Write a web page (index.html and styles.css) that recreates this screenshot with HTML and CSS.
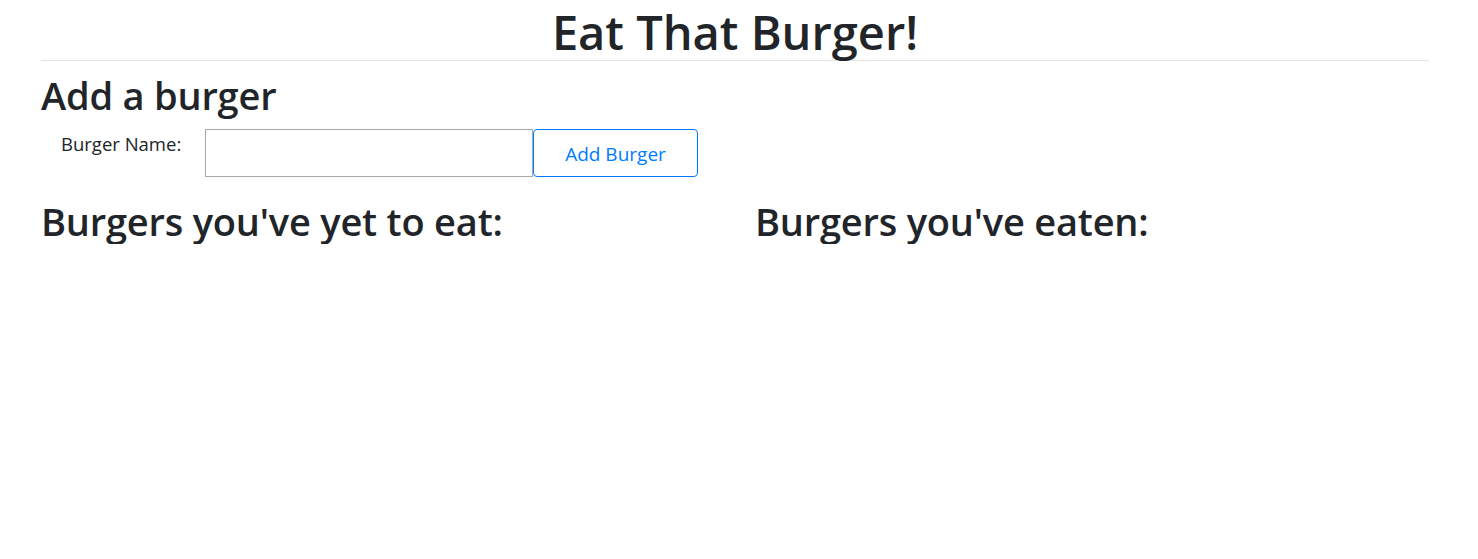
FILE: index.html
```html
<!DOCTYPE html>
<html lang="en">
<head>
<meta charset="utf-8">
<title>Eat That Burger!</title>
<link rel="stylesheet" href="styles.css">
</head>
<body>
<div class="page">
  <header class="masthead">
    <h1 class="title">Eat That Burger!</h1>
  </header>
  <section class="add">
    <h2 class="section-title">Add a burger</h2>
    <form class="add-form">
      <label class="add-label" for="burger">Burger Name:</label>
      <input class="add-input" id="burger" type="text">
      <button class="add-btn" type="button">Add Burger</button>
    </form>
  </section>
  <section class="lists">
    <div class="list">
      <h2 class="section-title">Burgers you've yet to eat:</h2>
    </div>
    <div class="list">
      <h2 class="section-title">Burgers you've eaten:</h2>
    </div>
  </section>
</div>
</body>
</html>
```
FILE: styles.css
```css
* { box-sizing: border-box; }
html, body { margin: 0; padding: 0; background: #fff; }
body {
  font-family: "Open Sans", "Noto Sans", sans-serif;
  color: #212529;
  font-size: 16px;
}
.page {
  width: 1388px;
  margin-left: 41px;
}
.masthead {
  padding-top: 4px;
  border-bottom: 1px solid #e3e3e3;
  text-align: center;
}
.title {
  margin: 0;
  font-size: 47px;
  font-weight: 600;
  line-height: 56px;
}
.section-title {
  margin: 0;
  font-size: 38px;
  font-weight: 600;
  line-height: 1.2;
  letter-spacing: -0.2px;
}
.add { padding-top: 12px; }
.add-form {
  display: flex;
  align-items: flex-start;
  margin-top: 10px;
}
.add-label {
  padding: 1px 0 0 20px;
  width: 164px;
  font-size: 18.5px;
  line-height: 1.5;
}
.add-input {
  width: 328px;
  height: 48px;
  border: 1px solid #a9a9a9;
  border-radius: 0;
  margin: 0;
  padding: 0 8px;
  font: inherit;
}
.add-btn {
  width: 165px;
  height: 48px;
  border: 1px solid #007bff;
  border-radius: 4px;
  background: #fff;
  color: #007bff;
  font-family: inherit;
  font-size: 19px;
  margin: 0;
  padding: 2px 0 0;
}
.lists {
  display: grid;
  grid-template-columns: 714px 1fr;
  margin-top: 22px;
}
```
